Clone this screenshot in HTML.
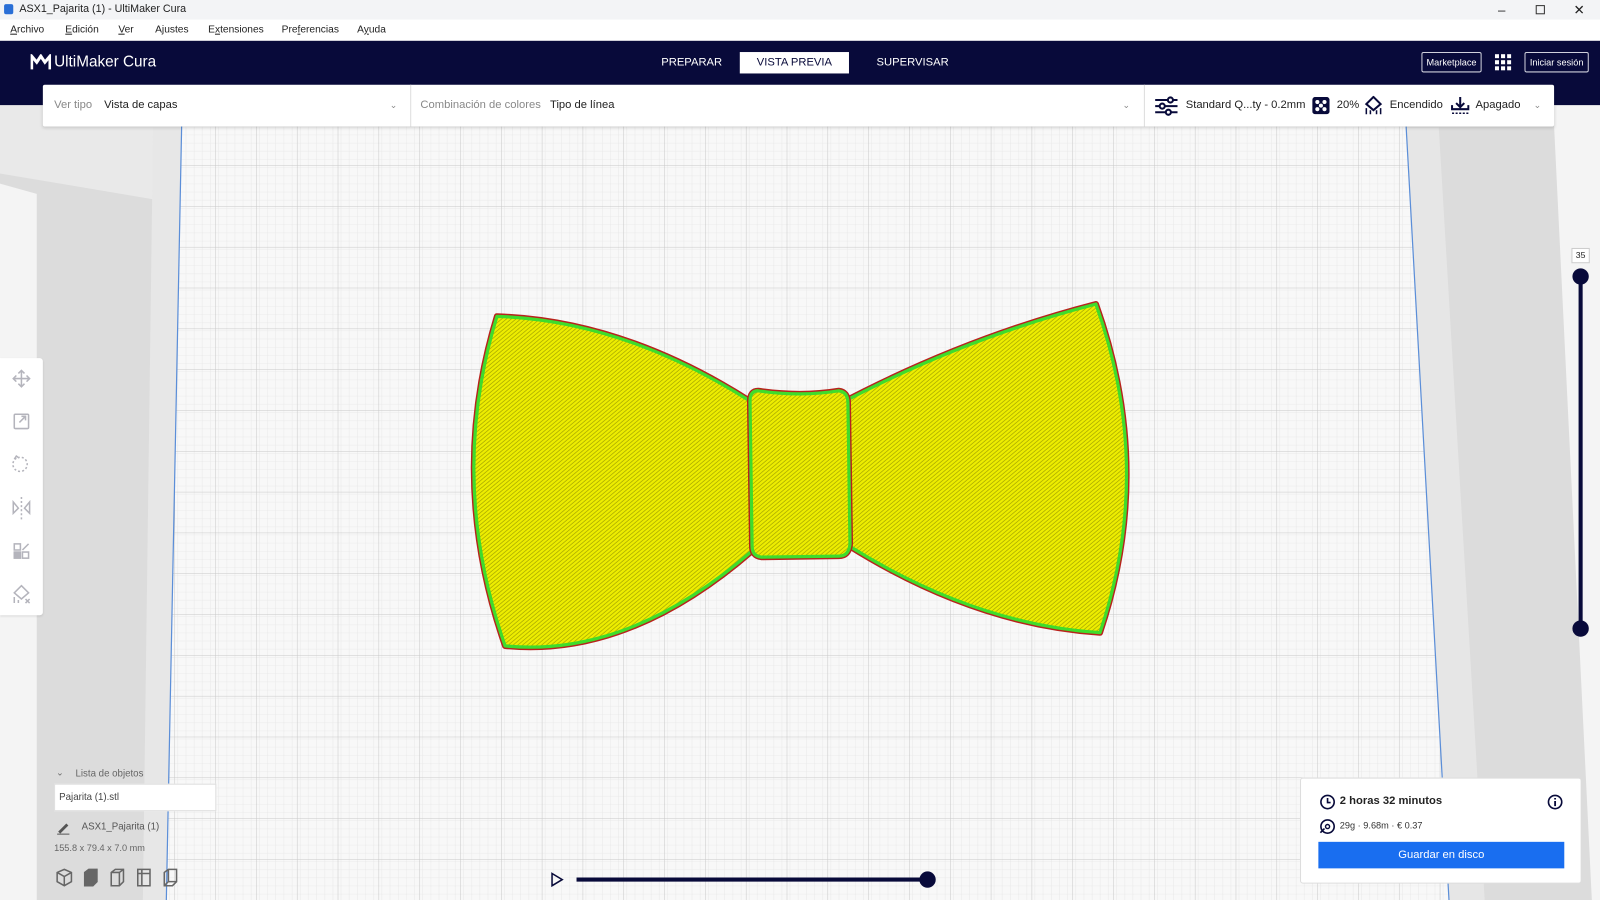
<!DOCTYPE html>
<html><head><meta charset="utf-8">
<style>
*{margin:0;padding:0;box-sizing:border-box}
html,body{width:1600px;height:900px;overflow:hidden;background:#e0e0e0}
#s{position:absolute;left:0;top:0;width:1568px;height:882px;transform:scale(1.020408);transform-origin:0 0;font-family:"Liberation Sans",sans-serif;color:#222}
.a{position:absolute;white-space:nowrap}
#title{left:0;top:0;width:1568px;height:19px;background:#f3f4f6;font-size:10.5px;line-height:19px}
#menu{left:0;top:19px;width:1568px;height:21px;background:#fff;font-size:10px;line-height:21px}
#hdr{left:0;top:40px;width:1568px;height:63px;background:#080a3a}
#tb{left:42px;top:83px;width:1481px;height:41px;background:#fff;border-radius:2px;box-shadow:0 1px 3px rgba(0,0,0,.15);font-size:11px;line-height:41px}
.g{color:#888}
.btn{border:1px solid #cfd0dc;color:#fff;font-size:9px;text-align:center;line-height:18px;height:20px;border-radius:2px}
</style></head><body>
<div id="s">
<svg class="a" style="left:0;top:0" width="1568" height="882" viewBox="0 0 1568 882">
<defs>
<pattern id="minor" width="8" height="8" patternUnits="userSpaceOnUse" x="3" y="2">
<rect width="8" height="8" fill="#f8f8f8"/>
<path d="M0 0H8M0 0V8" stroke="#e6e6e6" stroke-width="0.8"/>
</pattern>
<pattern id="major" width="40" height="40" patternUnits="userSpaceOnUse" x="11" y="2">
<rect width="40" height="40" fill="url(#minor)"/>
<path d="M0 0H40M0 0V40" stroke="#c8c8c8" stroke-width="1"/>
</pattern>
<pattern id="hatch" width="3" height="3" patternUnits="userSpaceOnUse" patternTransform="rotate(-40)">
<rect width="3" height="3" fill="#eded00"/>
<path d="M0 0.5H3" stroke="#9a9a00" stroke-width="0.6"/>
</pattern>
</defs>
<rect x="0" y="82" width="1568" height="800" fill="#dcdcdc"/>
<polygon points="0,180 36,190 36,882 0,882" fill="#f4f4f4"/>
<polygon points="0,100 178,100 178,200 0,170" fill="#e9e9e9"/>
<polygon points="150,125 180,125 166,882 140,882" fill="#e7e7e7"/>
<polygon points="1378,125 1410,125 1455,882 1420,882" fill="#e6e6e6"/>
<polygon points="1522,103 1568,103 1568,882 1560,882" fill="#f4f4f4"/>
<polygon points="178,124 1378,124 1420,882 163,882" fill="url(#major)"/>
<path d="M178 124 L163 882 M1378 124 L1420 882" stroke="#5b8ed8" stroke-width="1.2"/>
<g stroke-linejoin="round">
<path d="M487 310 Q611 314 735 393 L737 540 Q616 645 495 633 Q438 470 487 310 Z" fill="none" stroke="#b8221c" stroke-width="6"/>
<path d="M487 310 Q611 314 735 393 L737 540 Q616 645 495 633 Q438 470 487 310 Z" fill="url(#hatch)" stroke="#3fdc2c" stroke-width="3.2"/>
<path d="M832 391 Q950 330 1074 298 Q1132 460 1078 620 Q955 612 832 535 Z" fill="none" stroke="#b8221c" stroke-width="6"/>
<path d="M832 391 Q950 330 1074 298 Q1132 460 1078 620 Q955 612 832 535 Z" fill="url(#hatch)" stroke="#3fdc2c" stroke-width="3.2"/>
<path d="M743 383 Q785 389 822 383 Q831 384 831 395 L833 533 Q832 545 822 545 L746 546 Q737 545 737 535 L735 393 Q735 383 743 383 Z" fill="none" stroke="#b8221c" stroke-width="6"/>
<path d="M743 383 Q785 389 822 383 Q831 384 831 395 L833 533 Q832 545 822 545 L746 546 Q737 545 737 535 L735 393 Q735 383 743 383 Z" fill="url(#hatch)" stroke="#3fdc2c" stroke-width="3.2"/>
</g>
<line x1="1549" y1="271" x2="1549" y2="616" stroke="#080a3a" stroke-width="4"/>
<circle cx="1549" cy="271" r="8" fill="#080a3a"/><circle cx="1549" cy="616" r="8" fill="#080a3a"/>
<line x1="565" y1="862" x2="909" y2="862" stroke="#080a3a" stroke-width="4"/>
<circle cx="909" cy="862" r="8" fill="#080a3a"/>
<path d="M541 856 L551 862 L541 868 Z" fill="none" stroke="#080a3a" stroke-width="1.5"/>
</svg>

<div class="a" id="title"><span style="position:absolute;left:4px;top:4px;width:9px;height:10px;background:#2a6fd6;border-radius:2px"></span><span style="position:absolute;left:19px">ASX1_Pajarita (1) - UltiMaker Cura</span>
<span style="position:absolute;left:1468px;font-size:13px">&#8211;</span><span style="position:absolute;left:1505px;top:5px;width:9px;height:9px;border:1px solid #333"></span><span style="position:absolute;left:1542px;font-size:13px">&#10005;</span></div>
<div class="a" id="menu">
<span class="a" style="left:10px"><u>A</u>rchivo</span><span class="a" style="left:64px"><u>E</u>dición</span><span class="a" style="left:116px"><u>V</u>er</span><span class="a" style="left:152px">A<u>j</u>ustes</span><span class="a" style="left:204px">E<u>x</u>tensiones</span><span class="a" style="left:276px">Pre<u>f</u>erencias</span><span class="a" style="left:350px">A<u>y</u>uda</span></div>
<div class="a" id="hdr">
<svg class="a" style="left:30px;top:13px" width="20" height="16" viewBox="0 0 20 16"><path d="M1 15V2L6 8L10 2L14 8L19 2V15" fill="none" stroke="#fff" stroke-width="3"/></svg>
<span class="a" style="left:53px;top:12px;color:#fff;font-size:15px">UltiMaker Cura</span>
<span class="a" style="left:648px;top:15px;color:#fff;font-size:11px">PREPARAR</span>
<span class="a" style="left:725px;top:11px;width:107px;height:21px;background:#fff;color:#080a3a;font-size:11px;text-align:center;line-height:21px">VISTA PREVIA</span>
<span class="a" style="left:859px;top:15px;color:#fff;font-size:11px">SUPERVISAR</span>
<span class="a btn" style="left:1393px;top:11px;width:59px">Marketplace</span>
<svg class="a" style="left:1465px;top:13px" width="16" height="16"><g fill="#fff"><rect x="0" y="0" width="4" height="4"/><rect x="6" y="0" width="4" height="4"/><rect x="12" y="0" width="4" height="4"/><rect x="0" y="6" width="4" height="4"/><rect x="6" y="6" width="4" height="4"/><rect x="12" y="6" width="4" height="4"/><rect x="0" y="12" width="4" height="4"/><rect x="6" y="12" width="4" height="4"/><rect x="12" y="12" width="4" height="4"/></g></svg>
<span class="a btn" style="left:1494px;top:11px;width:63px">Iniciar sesión</span>
</div>
<div class="a" id="tb">
<span class="a g" style="left:11px">Ver tipo</span><span class="a" style="left:60px">Vista de capas</span><span class="a g" style="left:340px;font-size:9px">&#8964;</span>
<span class="a" style="left:360px;top:0;width:1px;height:41px;background:#ddd"></span>
<span class="a g" style="left:370px">Combinación de colores</span><span class="a" style="left:497px">Tipo de línea</span><span class="a g" style="left:1058px;font-size:9px">&#8964;</span>
<span class="a" style="left:1079px;top:0;width:1px;height:41px;background:#ddd"></span>
<svg class="a" style="left:1090px;top:11px" width="22" height="20"><g stroke="#080a3a" stroke-width="2" fill="#fff"><path d="M0 4H22M0 10H22M0 16H22"/><circle cx="15" cy="4" r="2.5"/><circle cx="7" cy="10" r="2.5"/><circle cx="13" cy="16" r="2.5"/></g></svg>
<span class="a" style="left:1120px">Standard Q...ty - 0.2mm</span>
<svg class="a" style="left:1244px;top:12px" width="17" height="17"><rect width="17" height="17" rx="3" fill="#080a3a"/><g fill="#fff"><circle cx="5" cy="5" r="2"/><circle cx="12" cy="5" r="2"/><circle cx="8.5" cy="8.5" r="2"/><circle cx="5" cy="12" r="2"/><circle cx="12" cy="12" r="2"/></g></svg>
<span class="a" style="left:1268px">20%</span>
<svg class="a" style="left:1295px;top:11px" width="18" height="19"><path d="M9 1L16 8L9 14L2 8Z" fill="none" stroke="#080a3a" stroke-width="2"/><path d="M2 12V18M6 14V18M12 14V18M16 12V18" stroke="#080a3a" stroke-width="1.5"/></svg>
<span class="a" style="left:1320px">Encendido</span>
<svg class="a" style="left:1380px;top:11px" width="18" height="19"><path d="M9 1V11M5 7L9 11L13 7M1 9V13H17V9" fill="none" stroke="#080a3a" stroke-width="2"/><path d="M1 17H17" stroke="#080a3a" stroke-width="1.5" stroke-dasharray="2 1.5"/></svg>
<span class="a" style="left:1404px">Apagado</span><span class="a g" style="left:1461px;font-size:9px">&#8964;</span>
</div>

<div class="a" style="left:0;top:351px;width:42px;height:252px;background:#fff;border-radius:0 3px 3px 0;box-shadow:0 1px 2px rgba(0,0,0,.1)">
<svg width="42" height="252"><g fill="none" stroke="#b4b4bc" stroke-width="1.5">
<path d="M21 12V28M13 20H29M18 15L21 12L24 15M18 25L21 28L24 25M16 17L13 20L16 23M26 17L29 20L26 23"/>
<rect x="14" y="55" width="14" height="14" rx="1"/><path d="M19 63L25 57M21 57H25V61"/>
<path d="M16 98A7 7 0 1 0 19 97" stroke-dasharray="2 2"/><path d="M14 99L16 96L19 98"/>
<path d="M21 136V158" stroke-dasharray="2 2"/><path d="M13 141L18 147L13 152Z M29 141L24 147L29 152Z"/>
<rect x="14" y="182" width="6" height="6"/><rect x="14" y="190" width="6" height="6" fill="#b4b4bc"/><rect x="22" y="190" width="6" height="6"/><path d="M22 188L28 182"/>
<path d="M21 223L28 230L21 236L14 230Z"/><path d="M14 234V240M18 237V240M25 236L29 240M29 236L25 240"/>
</g></svg></div>

<span class="a" style="left:55px;top:752px;font-size:9px;color:#666">&#8964;</span>
<span class="a" style="left:74px;top:753px;font-size:9.5px;color:#666">Lista de objetos</span>
<div class="a" style="left:53px;top:768px;width:159px;height:27px;background:#fff;border:1px solid #ddd;font-size:9.5px;line-height:25px;padding-left:4px;color:#444">Pajarita (1).stl</div>
<svg class="a" style="left:55px;top:804px" width="14" height="14"><path d="M2 11L10 3L12 5L4 13Z" fill="#555"/><path d="M1 13.5H13" stroke="#555"/></svg>
<span class="a" style="left:80px;top:805px;font-size:9.5px;color:#555">ASX1_Pajarita (1)</span>
<span class="a" style="left:53px;top:826px;font-size:9px;color:#666">155.8 x 79.4 x 7.0 mm</span>
<svg class="a" style="left:54px;top:850px" width="130" height="20"><g fill="none" stroke="#666" stroke-width="1.5">
<path d="M9 2L16 5V14L9 18L2 14V5Z M2 5L9 9L16 5M9 9V18"/>
<path d="M29 5L33 2H41V14L37 18H29Z" fill="#666"/><path d="M29 5H37V18M37 5L41 2"/>
<path d="M55 5L59 2H67V14L63 18H55Z"/><path d="M55 5H63V18M63 5L67 2"/>
<path d="M81 2H93V18H81Z"/><path d="M81 6H93M85 2V18"/>
<path d="M107 5L111 2H119V14L115 18H107Z"/><path d="M111 2V14H119M111 14L107 18"/>
</g></svg>

<div class="a" style="left:1540px;top:243px;width:18px;height:15px;background:#fff;border:1px solid #ccc;font-size:8.5px;text-align:center;line-height:13px">35</div>

<div class="a" style="left:1274px;top:762px;width:276px;height:104px;background:#fff;border:1px solid #ddd;border-radius:3px">
<svg class="a" style="left:18px;top:15px" width="16" height="16"><circle cx="8" cy="8" r="6.5" fill="none" stroke="#080a3a" stroke-width="1.6"/><path d="M8 4V8.5H11" fill="none" stroke="#080a3a" stroke-width="1.6"/></svg>
<span class="a" style="left:38px;top:16px;font-size:11px;font-weight:bold">2 horas 32 minutos</span>
<svg class="a" style="left:241px;top:15px" width="16" height="16"><circle cx="8" cy="8" r="6.5" fill="none" stroke="#080a3a" stroke-width="1.6"/><path d="M8 7V12M8 4V5.5" stroke="#080a3a" stroke-width="1.8"/></svg>
<svg class="a" style="left:18px;top:39px" width="16" height="16"><circle cx="8" cy="8" r="6.5" fill="none" stroke="#080a3a" stroke-width="1.6"/><circle cx="8" cy="8" r="2" fill="none" stroke="#080a3a" stroke-width="1.4"/><path d="M1 14L5 10" stroke="#080a3a" stroke-width="1.6"/></svg>
<span class="a" style="left:38px;top:41px;font-size:9px;color:#333">29g · 9.68m · € 0.37</span>
<div class="a" style="left:17px;top:62px;width:241px;height:26px;background:#196ef0;color:#fff;font-size:11px;text-align:center;line-height:26px">Guardar en disco</div>
</div>
</div>
</body></html>
